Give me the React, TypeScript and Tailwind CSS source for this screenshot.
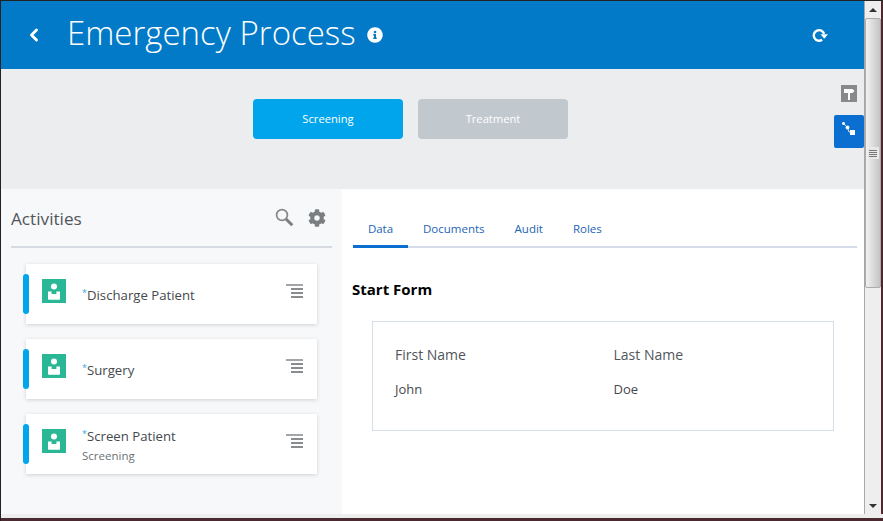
import { ChevronLeft } from "lucide-react"
import { FaCog, FaInfoCircle } from "react-icons/fa"

function PersonTile() {
  return (
    <div className="w-6 h-6 bg-[#2ab795] flex items-center justify-center shrink-0">
      <svg width="14" height="17" viewBox="0 0 14 17">
        <circle cx="7" cy="3.5" r="3" fill="#fff" />
        <path d="M1 8.5h3.6v2.4h4.8V8.5H13v7.5a.8.8 0 0 1-.8.8H1.8a.8.8 0 0 1-.8-.8z" fill="#fff" />
      </svg>
    </div>
  )
}

function MenuLines() {
  return (
    <div className="flex flex-col items-end gap-[2px]">
      <div className="w-[17px] h-[2px] bg-[#a3a5a8]" />
      <div className="w-[12px] h-[2px] bg-[#8a8d90]" />
      <div className="w-[12px] h-[2px] bg-[#8a8d90]" />
      <div className="w-[12px] h-[2px] bg-[#8a8d90]" />
    </div>
  )
}

function ActivityCard({ name, sub }: { name: string; sub?: string }) {
  return (
    <div className="relative ml-[15px] w-[291px] h-[60px] bg-white shadow-[0_1px_4px_rgba(0,0,0,0.16)] flex items-center pl-4 pr-[14px]">
      <div className="absolute left-[-3px] top-[10px] w-[6px] h-[40px] rounded-[3px] bg-[#00a5ec]" />
      <div className="self-start mt-[15px]">
        <PersonTile />
      </div>
      <div className="ml-4 flex-1">
        <div className="text-[13.2px] leading-[18px] text-[#45494d]">
          <span className="text-[#3aa5e8] text-[9px] align-[4px]">*</span>
          {name}
        </div>
        {sub && <div className="text-[11.5px] leading-[16px] mt-[3px] text-[#6d7175]">{sub}</div>}
      </div>
      <div className="self-start mt-[20px]">
        <MenuLines />
      </div>
    </div>
  )
}

export default function App() {
  return (
    <div className="w-[883px] h-[521px] flex flex-col overflow-hidden bg-white border-l border-t border-l-[#222] border-t-[#222] font-['Open_Sans',sans-serif]">
      <div className="flex flex-1 min-h-0">
        <div className="w-[863px] flex flex-col">
          {/* header */}
          <div className="h-[68px] bg-[#027ac7] flex items-center text-white shrink-0">
            <ChevronLeft className="ml-[23px] w-[20px] h-[20px]" strokeWidth={3.5} />
            <h1 className="ml-[23px] -mt-[5px] text-[33px] font-light leading-none whitespace-nowrap">Emergency Process</h1>
            <FaInfoCircle className="ml-[11px] w-4 h-4 text-white" />
            <div className="flex-1" />
            <svg className="mr-[35px]" width="18" height="16" viewBox="0 0 17 15">
              <path d="M10.5 12A5 5 0 1 1 12.4 6.5" stroke="#fff" strokeWidth="2.3" fill="none" />
              <path d="M9 6.8h7l-3.5 4.2z" fill="#fff" />
            </svg>
          </div>

          {/* stages */}
          <div className="h-[120px] bg-[#ecedef] flex shrink-0">
            <div className="flex gap-[15px] pl-[252px] pt-[30px]">
              <div className="w-[150px] h-[40px] rounded-[4px] bg-[#00a5ec] text-white text-[11.2px] flex items-center justify-center">Screening</div>
              <div className="w-[150px] h-[40px] rounded-[4px] bg-[#c1c9cf] text-white text-[11.2px] flex items-center justify-center">Treatment</div>
            </div>
            <div className="flex-1" />
            <div className="flex flex-col items-end pt-4">
              <div className="w-4 h-[17px] mr-[7px] bg-[#87898b] flex items-center justify-center">
                <svg width="14" height="15" viewBox="0 0 14 15">
                  <path d="M2 3h8.5l2 2-2 2H8v7H6V7H2z" fill="#fff" />
                </svg>
              </div>
              <div className="mt-[13px] w-[30px] h-[33px] rounded-[2px] bg-[#0a6fd0] flex items-center justify-center">
                <svg className="mb-[7px]" width="16" height="16" viewBox="0 0 16 16">
                  <path d="M2.5 3.5l4 4L8 12h2" stroke="#cfe3f7" strokeWidth="1" fill="none" />
                  <circle cx="2.5" cy="3.5" r="1.4" fill="#fff" />
                  <circle cx="6.5" cy="7.5" r="1.9" fill="#fff" />
                  <rect x="9" y="10" width="5" height="5" fill="#fff" />
                </svg>
              </div>
            </div>
          </div>

          <div className="flex flex-1 min-h-0">
            {/* activities */}
            <div className="w-[341px] bg-[#f7f8fa] px-[10px]">
              <div className="flex items-center h-[59px] border-b-2 border-[#d5dbe1]">
                <span className="text-[17.2px] pt-[2px] text-[#51565b]">Activities</span>
                <div className="flex-1" />
                <svg width="19" height="19" viewBox="0 0 19 19">
                  <circle cx="7" cy="7" r="5.4" stroke="#85888b" strokeWidth="1.7" fill="none" />
                  <path d="M11 11l6.3 6.3" stroke="#7b7e81" strokeWidth="3" />
                </svg>
                <FaCog className="ml-[14px] mr-[6px] w-[18px] h-[18px] text-[#7b7e81]" />
              </div>
              <div className="flex flex-col gap-[15px] pt-[16px]">
                <ActivityCard name="Discharge Patient" />
                <ActivityCard name="Surgery" />
                <ActivityCard name="Screen Patient" sub="Screening" />
              </div>
            </div>

            {/* detail */}
            <div className="flex-1 bg-white pl-[11px]">
              <div className="mt-[18px] mr-[7px] flex border-b-2 border-[#d5dbe8] text-[11.5px] text-[#1d65b5] h-[41px]">
                <div className="w-[55px] pt-[5px] flex items-center justify-center border-b-[3px] border-[#0a6fd0] h-[41px]">Data</div>
                <div className="ml-[15px] pt-[5px] flex items-center h-[39px]">Documents</div>
                <div className="ml-[30px] pt-[5px] flex items-center h-[39px]">Audit</div>
                <div className="ml-[30px] pt-[5px] flex items-center h-[39px]">Roles</div>
              </div>
              <h2 className="mt-[31px] -ml-[1px] text-[15px] leading-[20px] font-bold text-black">Start Form</h2>
              <div className="mt-[22px] ml-[19px] w-[462px] h-[110px] border border-[#d5dee6] pl-[22px] pt-[23px]">
                <div className="grid grid-cols-[218.5px_1fr] text-[#51565b]">
                  <div className="text-[14px] leading-[20px]">First Name</div>
                  <div className="text-[14px] leading-[20px]">Last Name</div>
                  <div className="mt-[15px] text-[13px] leading-[18px] text-[#45494d]">John</div>
                  <div className="mt-[15px] text-[13px] leading-[18px] text-[#45494d]">Doe</div>
                </div>
              </div>
            </div>
          </div>
        </div>

        {/* scrollbar */}
        <div className="w-[17px] bg-[#eeeeee] border-l border-[#a8a8a8] flex flex-col items-center shrink-0">
          <div className="h-[17px] flex items-center justify-center">
            <div className="w-0 h-0 border-l-[4px] border-r-[4px] border-b-[4px] border-l-transparent border-r-transparent border-b-[#333]" />
          </div>
          <div className="w-[16px] h-[270px] bg-gradient-to-r from-[#f2f2f2] to-[#c4c4c4] border border-[#ababab] rounded-[2px] flex flex-col items-center justify-center">
            <div className="w-[11px] h-[12px] bg-[#e8e8e8] flex flex-col items-center justify-center gap-[1px]">
              <div className="w-[8px] h-[1px] bg-[#777]" />
              <div className="w-[8px] h-[1px] bg-[#777]" />
              <div className="w-[8px] h-[1px] bg-[#777]" />
              <div className="w-[8px] h-[1px] bg-[#777]" />
            </div>
          </div>
          <div className="flex-1" />
          <div className="h-[17px] flex items-center justify-center">
            <div className="w-0 h-0 border-l-[4px] border-r-[4px] border-t-[4px] border-l-transparent border-r-transparent border-t-[#333]" />
          </div>
        </div>
        <div className="w-[2px] bg-[#4a2a30] shrink-0" />
      </div>
      <div className="h-[4px] bg-[#eeeeee] shrink-0" />
      <div className="h-[3px] bg-[#4a2a30] shrink-0" />
    </div>
  )
}
